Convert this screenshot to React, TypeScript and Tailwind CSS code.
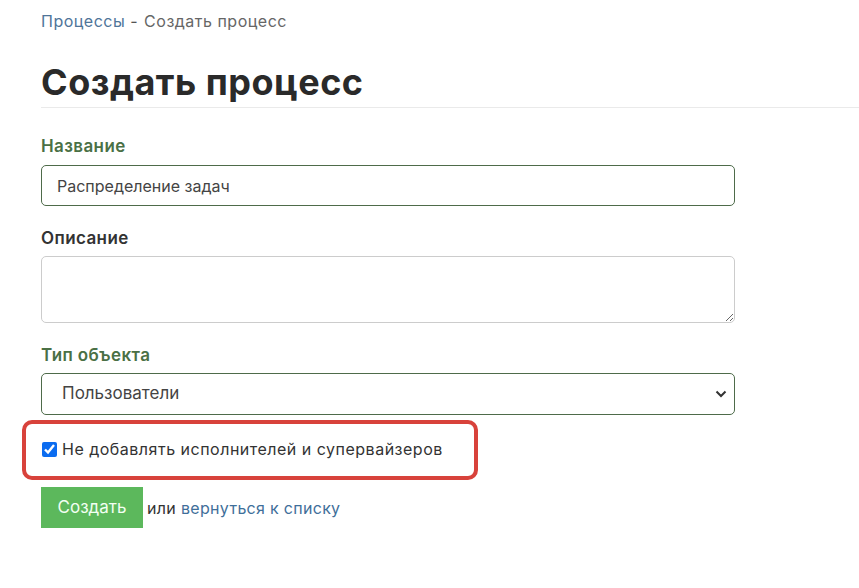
import { useState } from "react";

export default function App() {
  const [name, setName] = useState("Распределение задач");
  const [desc, setDesc] = useState("");
  const [type, setType] = useState("users");
  const [skip, setSkip] = useState(true);

  return (
    <div className="min-h-[588px] bg-white pl-[41px] pt-[9px] font-['Inter',sans-serif] text-[16px] text-[#333]">
      <div className="leading-6 tracking-[0.5px]">
        <a href="#" className="text-[#4f7599]">
          Процессы
        </a>
        <span className="text-[#555]"> - </span>
        <span className="ml-[1px] text-[#666]">Создать процесс</span>
      </div>

      <div className="mt-[29px] border-b border-[#eaeaea] pb-[5px]">
        <h1 className="text-[36px] font-bold leading-10 tracking-[0.5px] text-[#2a2a2a]">
          Создать процесс
        </h1>
      </div>

      <form className="w-[694px]" onSubmit={(e) => e.preventDefault()}>
        <label className="mt-[26px] block text-[17px] font-semibold leading-6 tracking-[0.4px] text-[#4a7045]">
          Название
        </label>
        <input
          type="text"
          value={name}
          onChange={(e) => setName(e.target.value)}
          className="mt-[7px] block h-[41px] w-full rounded-[5px] border border-[#4e6b4a] px-[15px] text-[#444] outline-none"
        />

        <label className="mt-[20px] block text-[17px] font-semibold leading-6 tracking-[0.4px] text-[#333]">
          Описание
        </label>
        <textarea
          value={desc}
          onChange={(e) => setDesc(e.target.value)}
          className="mt-[6px] block h-[67px] w-full rounded-[5px] border border-[#cccccc] px-[15px] py-2 outline-none"
        />

        <label className="mt-[20px] block text-[17px] font-semibold leading-6 tracking-[0.4px] text-[#4a7045]">
          Тип объекта
        </label>
        <div className="relative mt-[6px]">
          <select
            value={type}
            onChange={(e) => setType(e.target.value)}
            className="block h-[42px] w-full appearance-none rounded-[5px] border border-[#4e6b4a] bg-white pl-[20px] text-[17px] text-[#444] outline-none"
          >
            <option value="users">Пользователи</option>
            <option value="groups">Группы</option>
          </select>
          <svg
            viewBox="0 0 12 8"
            className="pointer-events-none absolute right-[8px] top-[17px] h-[8px] w-[12px]"
          >
            <path d="M1.5 1.5 6 6l4.5-4.5" fill="none" stroke="#333" strokeWidth="2" />
          </svg>
        </div>
      </form>

      <div className="-ml-[19px] mt-[5px] flex h-[60px] w-[456px] items-center rounded-[10px] border-4 border-[#d8423b] pl-[16px]">
        <label className="-mt-[2px] flex items-center">
          <input
            type="checkbox"
            checked={skip}
            onChange={(e) => setSkip(e.target.checked)}
            className="m-0 h-[15px] w-[15px] accent-[#0b6cf0]"
          />
          <span className="ml-[5px] leading-6 tracking-[0.5px] text-[#333]">
            Не добавлять исполнителей и супервайзеров
          </span>
        </label>
      </div>

      <div className="mt-[7px] flex items-center">
        <button
          type="submit"
          className="h-[41px] w-[102px] bg-[#5cb85c] text-[17px] text-[#f2fff2]"
        >
          Создать
        </button>
        <span className="ml-[4px] tracking-[0.3px]">или</span>
        <a href="#" className="ml-[5px] tracking-[0.3px] text-[#3f6f9a]">
          вернуться к списку
        </a>
      </div>
    </div>
  );
}
